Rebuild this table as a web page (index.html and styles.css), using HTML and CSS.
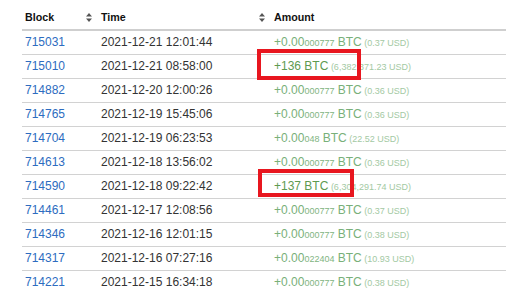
FILE: index.html
```html
<!DOCTYPE html>
<html>
<head>
<meta charset="utf-8">
<link rel="stylesheet" href="styles.css">
</head>
<body>
<table class="blocks">
  <colgroup><col class="c-block"><col class="c-time"><col class="c-amount"></colgroup>
  <thead>
    <tr>
      <th><span class="th-label">Block</span><svg class="sort" viewBox="0 0 6 9" width="6" height="9"><path d="M3 0L6 3.6H0Z M3 9L6 5.4H0Z" fill="#555"/></svg></th>
      <th><span class="th-label">Time</span><svg class="sort" viewBox="0 0 6 9" width="6" height="9"><path d="M3 0L6 3.6H0Z M3 9L6 5.4H0Z" fill="#555"/></svg></th>
      <th><span class="th-label">Amount</span></th>
    </tr>
  </thead>
  <tbody>
    <tr><td><a href="#">715031</a></td><td>2021-12-21 12:01:44</td><td class="amt"><span class="big">+0.00</span><span class="sm">000777</span><span class="big"> BTC</span><span class="usd"> (0.37 USD)</span></td></tr>
    <tr><td><a href="#">715010</a></td><td>2021-12-21 08:58:00</td><td class="amt"><span class="big strong">+136 BTC</span><span class="usd"> (6,382,371.23 USD)</span><span class="mark mark-1"></span></td></tr>
    <tr><td><a href="#">714882</a></td><td>2021-12-20 12:00:26</td><td class="amt"><span class="big">+0.00</span><span class="sm">000777</span><span class="big"> BTC</span><span class="usd"> (0.36 USD)</span></td></tr>
    <tr><td><a href="#">714765</a></td><td>2021-12-19 15:45:06</td><td class="amt"><span class="big">+0.00</span><span class="sm">000777</span><span class="big"> BTC</span><span class="usd"> (0.36 USD)</span></td></tr>
    <tr><td><a href="#">714704</a></td><td>2021-12-19 06:23:53</td><td class="amt"><span class="big">+0.00</span><span class="sm">048</span><span class="big"> BTC</span><span class="usd"> (22.52 USD)</span></td></tr>
    <tr><td><a href="#">714613</a></td><td>2021-12-18 13:56:02</td><td class="amt"><span class="big">+0.00</span><span class="sm">000777</span><span class="big"> BTC</span><span class="usd"> (0.36 USD)</span></td></tr>
    <tr><td><a href="#">714590</a></td><td>2021-12-18 09:22:42</td><td class="amt"><span class="big strong">+137 BTC</span><span class="usd"> (6,304,291.74 USD)</span><span class="mark mark-2"></span></td></tr>
    <tr><td><a href="#">714461</a></td><td>2021-12-17 12:08:56</td><td class="amt"><span class="big">+0.00</span><span class="sm">000777</span><span class="big"> BTC</span><span class="usd"> (0.37 USD)</span></td></tr>
    <tr><td><a href="#">714346</a></td><td>2021-12-16 12:01:15</td><td class="amt"><span class="big">+0.00</span><span class="sm">000777</span><span class="big"> BTC</span><span class="usd"> (0.38 USD)</span></td></tr>
    <tr><td><a href="#">714317</a></td><td>2021-12-16 07:27:16</td><td class="amt"><span class="big">+0.00</span><span class="sm">022404</span><span class="big"> BTC</span><span class="usd"> (10.93 USD)</span></td></tr>
    <tr><td><a href="#">714221</a></td><td>2021-12-15 16:34:18</td><td class="amt"><span class="big">+0.00</span><span class="sm">000777</span><span class="big"> BTC</span><span class="usd"> (0.38 USD)</span></td></tr>
  </tbody>
</table>
</body>
</html>
```
FILE: styles.css
```css
html, body {
  margin: 0;
  padding: 0;
  background: #fff;
  overflow: hidden;
}
body {
  font-family: "Liberation Sans", Arial, sans-serif;
  color: #333;
}
.blocks {
  margin-left: 22px;
  width: 484px;
  border-collapse: collapse;
  table-layout: fixed;
}
.c-block { width: 76px; }
.c-time { width: 173px; }
.c-amount { width: 235px; }
.blocks th {
  text-align: left;
  font-size: 10.7px;
  font-weight: bold;
  color: #111;
  line-height: 13px;
  padding: 11px 3px 5px;
  border-bottom: 2px solid #cfcfcf;
  white-space: nowrap;
}
.blocks th .sort {
  float: right;
  margin: 2px 3px 0 0;
}
.blocks td {
  font-size: 12px;
  line-height: 15px;
  height: 15px;
  padding: 4px 3px;
  border-bottom: 1px solid #d2d2d2;
  white-space: nowrap;
  vertical-align: middle;
}
.blocks td a {
  color: #2d6cc0;
  text-decoration: none;
}
.amt {
  position: relative;
  color: #79b079;
}
.amt .big { font-size: 12px; line-height: 12px; }
.amt .sm { font-size: 9px; line-height: 9px; color: #82b482; }
.amt .usd { font-size: 9px; line-height: 9px; color: #a3c9a3; }
.amt .strong { color: #5e9a50; }
.mark {
  position: absolute;
  border: 4px solid #e8161f;
  box-sizing: border-box;
  pointer-events: none;
}
.mark-1 { left: -14px; top: -6px; width: 104px; height: 31px; }
.mark-2 { left: -13px; top: -6px; width: 96px; height: 28px; }
```
